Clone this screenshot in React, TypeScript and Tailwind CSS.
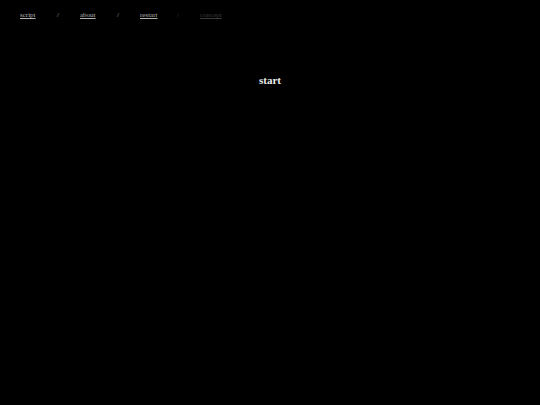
const links = [
  { label: "script", dim: false },
  { label: "about", dim: false },
  { label: "restart", dim: false },
  { label: "concept", dim: true },
];

export default function App() {
  return (
    <div
      className="min-h-screen w-full bg-black"
      style={{ fontFamily: '"Liberation Serif", "Times New Roman", serif' }}
    >
      {/* top nav */}
      <nav className="flex items-center pl-[20px] pt-[11px] text-[7px] leading-[8px]">
        {links.map((l, i) => (
          <div key={l.label} className="flex">
            <a
              href="#"
              className={
                "w-[37px] underline " +
                (l.dim
                  ? "text-[#3a3a3a] decoration-[#3a3a3a]"
                  : "text-[#b0b0b0] decoration-[#b0b0b0]")
              }
            >
              {l.label}
            </a>
            {i < links.length - 1 && (
              <span
                className={
                  "w-[23px] " +
                  (i === 2 ? "text-[#3a3a3a]" : "text-[#b0b0b0]")
                }
              >
                /
              </span>
            )}
          </div>
        ))}
      </nav>

      {/* start button */}
      <main className="flex justify-center pt-[54px]">
        <button className="text-[11px] font-bold leading-[14px] text-[#ececec]">
          start
        </button>
      </main>
    </div>
  );
}
